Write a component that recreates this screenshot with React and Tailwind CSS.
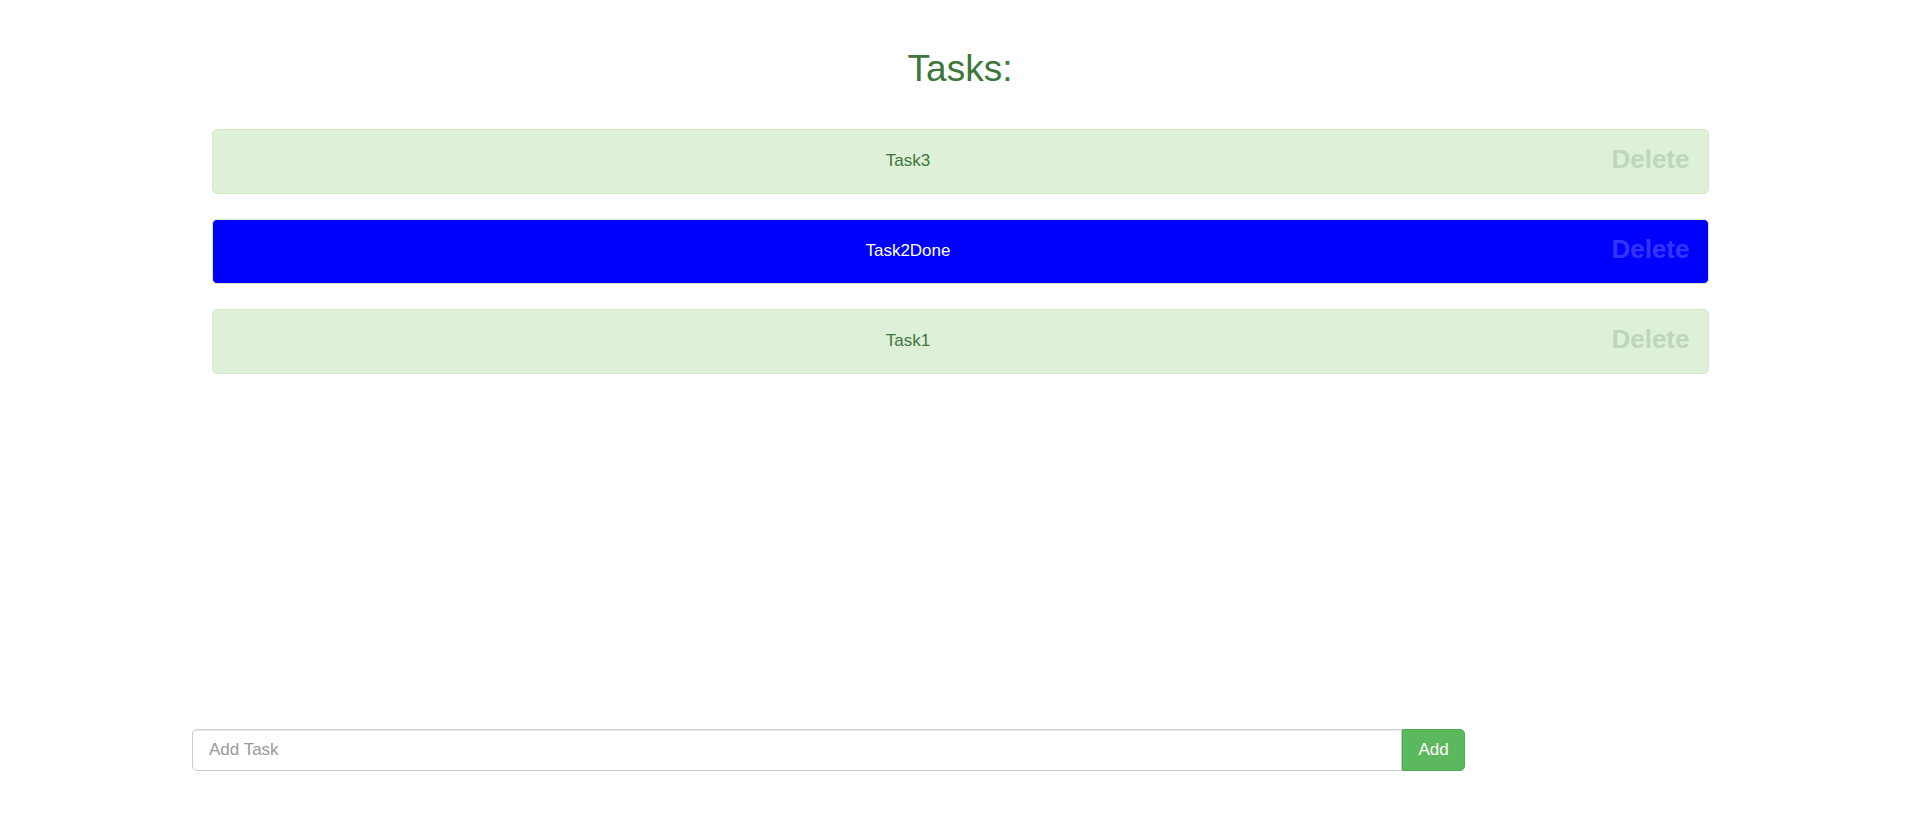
export default function App() {
  const tasks = [
    { name: "Task3", done: false },
    { name: "Task2Done", done: true },
    { name: "Task1", done: false },
  ];
  return (
    <div
      className="h-[820px] w-full bg-white flex flex-col"
      style={{ fontFamily: '"Liberation Sans", Arial, sans-serif' }}
    >
      <h2 className="mt-[49px] text-center text-[37px] leading-[1.1] text-[#3c763d] font-normal">
        Tasks:
      </h2>
      <div className="mt-[39px] mx-auto w-[1497px] flex flex-col gap-[25px]">
        {tasks.map((t) => (
          <div
            key={t.name}
            className={
              t.done
                ? "h-[65px] flex items-center px-[18px] gap-[26px] rounded-[5px] border border-[#d6e9c6] bg-[#0000ff] text-white"
                : "h-[65px] flex items-center px-[18px] gap-[26px] rounded-[5px] border border-[#d6e9c6] bg-[#dff0d8] text-[#3c763d]"
            }
          >
            <div className="flex-1 text-center text-[17px] leading-[1.4]">{t.name}</div>
            <button className="mb-[4px] text-[26px] leading-none font-bold opacity-20 bg-transparent border-0 p-0 cursor-pointer">
              Delete
            </button>
          </div>
        ))}
      </div>
      <div className="mt-auto mb-[49px] ml-[192px] flex">
        <input
          className="w-[1210px] h-[42px] border border-[#ccc] rounded-l-[5px] px-[16px] text-[17px] text-[#555] placeholder:text-[#999] outline-none shadow-[inset_0_1px_1px_rgba(0,0,0,0.075)]"
          placeholder="Add Task"
        />
        <button className="w-[63px] h-[42px] bg-[#5cb85c] border border-[#4cae4c] rounded-r-[5px] text-white text-[17px]">
          Add
        </button>
      </div>
    </div>
  );
}
